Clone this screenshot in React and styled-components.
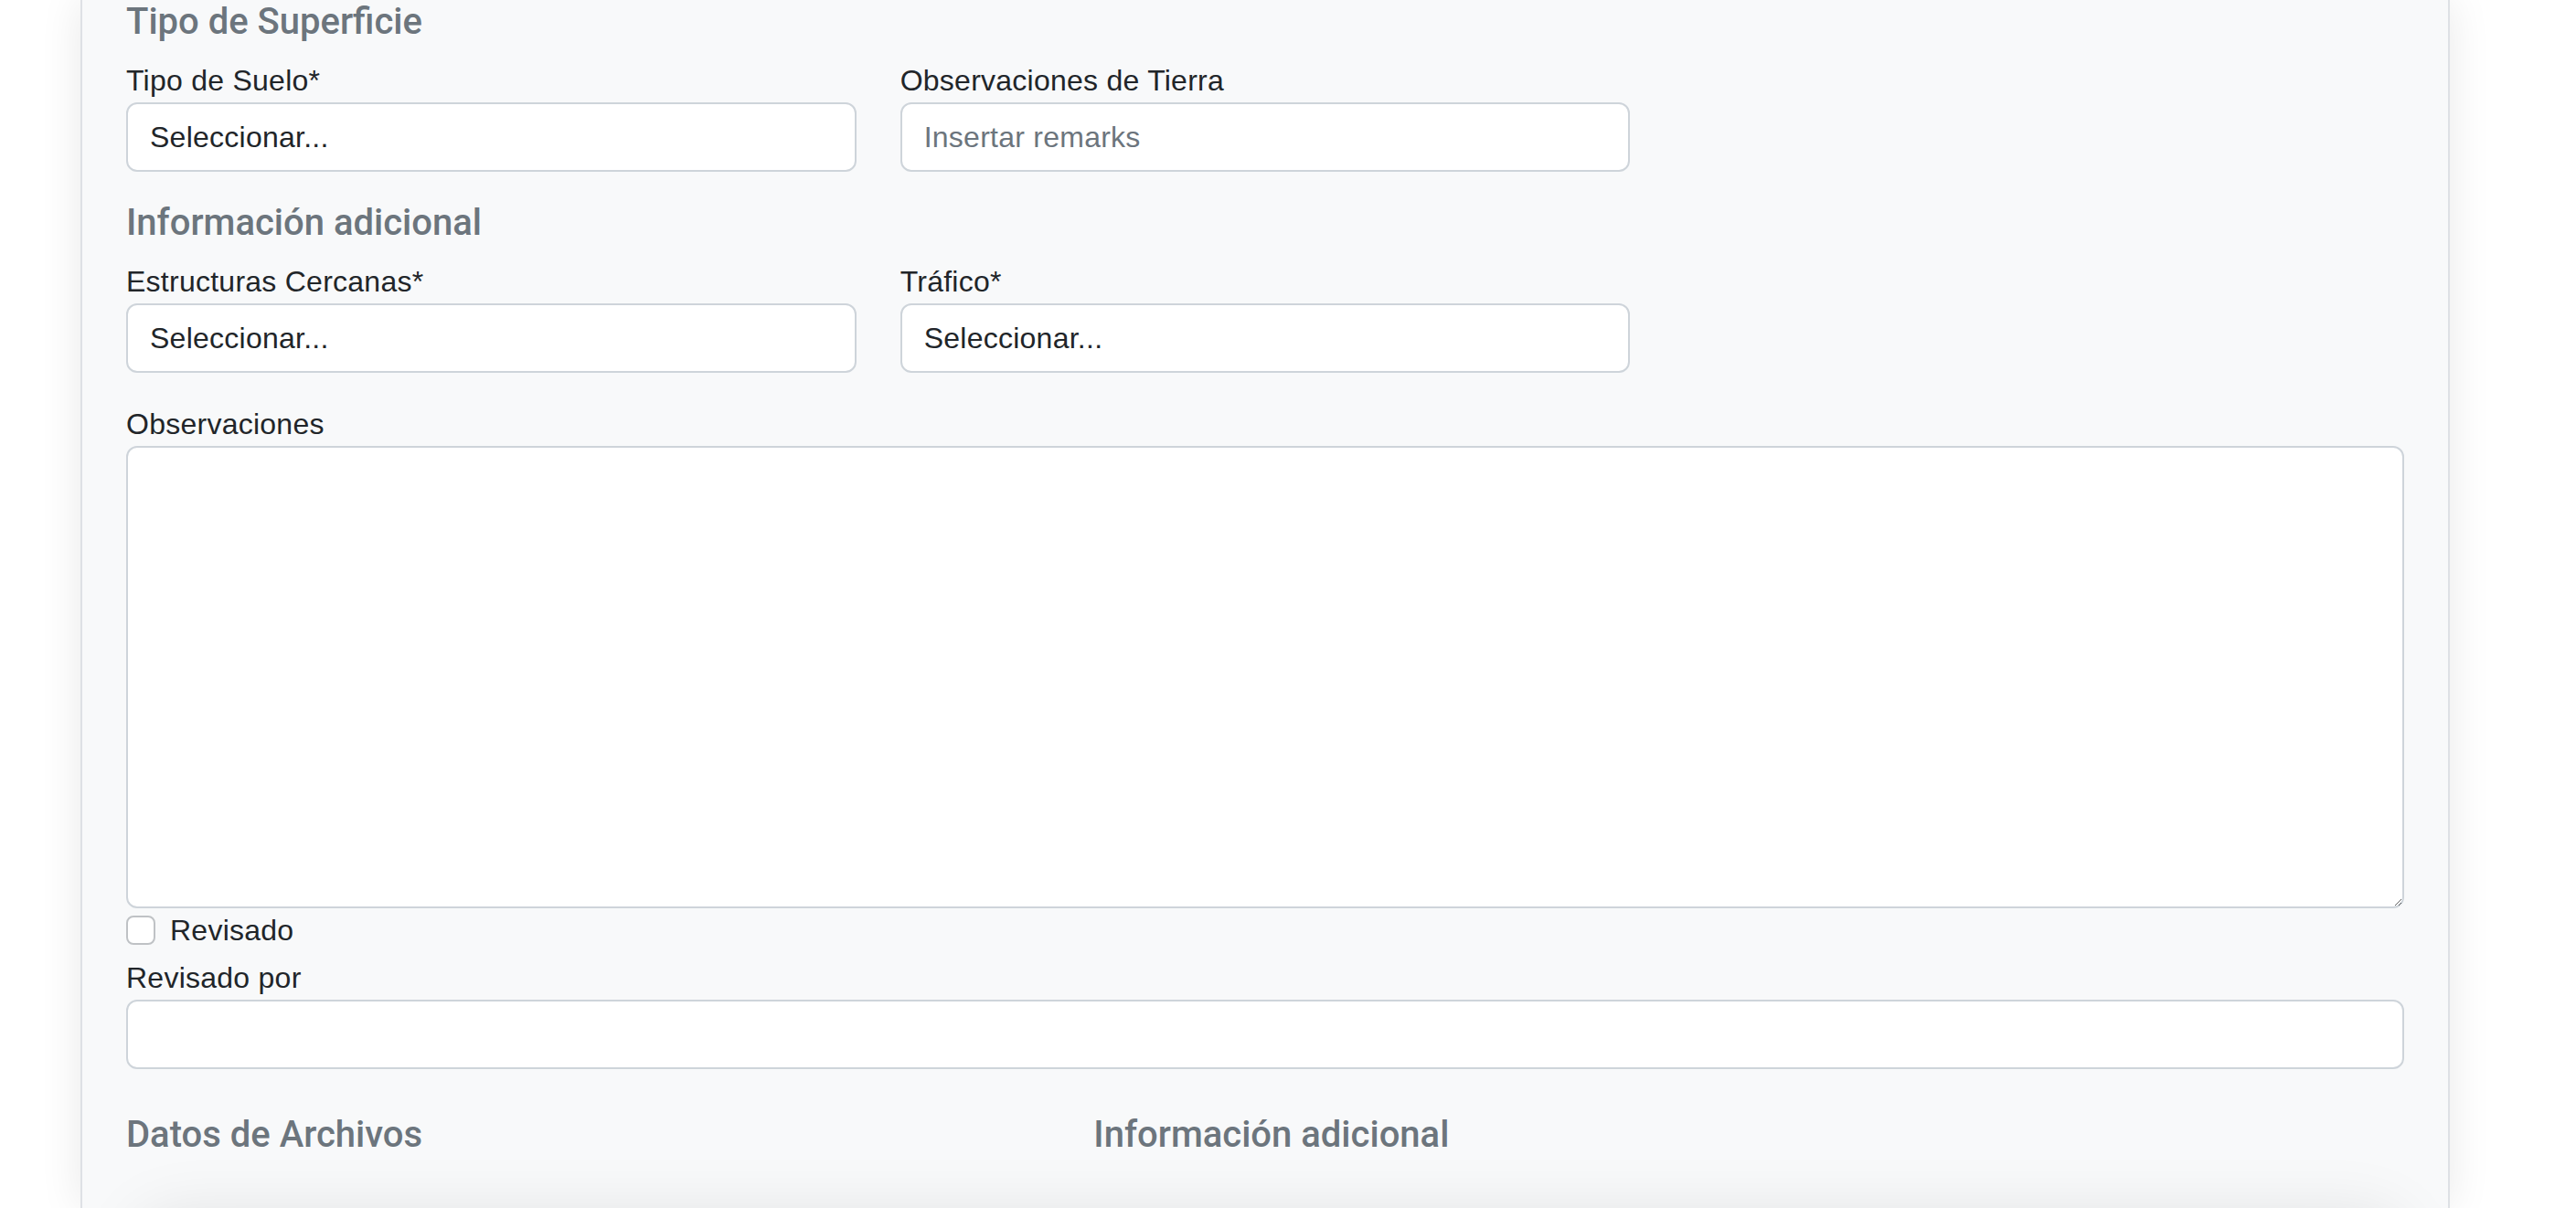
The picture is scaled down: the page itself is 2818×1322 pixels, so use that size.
import React from 'react';
import styled, { createGlobalStyle } from 'styled-components';

const GlobalStyle = createGlobalStyle`
  html, body {
    margin: 0;
    padding: 0;
    background: #ffffff;
    overflow: hidden;
  }
  body {
    font-family: "Liberation Sans", Arial, sans-serif;
    color: #212529;
  }
  * {
    box-sizing: border-box;
  }
`;

const Page = styled.div`
  height: 1322px;
  padding-left: 88px;
`;

const Panel = styled.div`
  width: 2592px;
  min-height: 1322px;
  background: #f8f9fa;
  border-left: 2px solid #dee1e5;
  border-right: 2px solid #dee1e5;
  box-shadow: 0 0 44px rgba(0, 0, 0, 0.09);
  padding: 0 48px;
`;

const SectionTitle = styled.h5`
  margin: 0 0 16px;
  font-family: Roboto, "Liberation Sans", Arial, sans-serif;
  font-size: 40px;
  font-weight: 500;
  line-height: 48px;
  color: #6c757d;
`;

const FieldRow = styled.div`
  display: grid;
  grid-template-columns: repeat(3, 1fr);
  column-gap: 48px;
  margin-bottom: 32px;
`;

const Field = styled.div`
  display: flex;
  flex-direction: column;
  margin-bottom: ${p => p.$mb || 0}px;
`;

const Label = styled.label`
  font-size: 32px;
  line-height: 48px;
  letter-spacing: 0.25px;
  color: #212529;
`;

const TextInput = styled.input`
  height: 76px;
  width: 100%;
  padding: 0 24px;
  font-family: inherit;
  font-size: 32px;
  letter-spacing: 0.25px;
  color: #212529;
  background: #ffffff;
  border: 2px solid #ced4da;
  border-radius: 12px;
  outline: none;

  &::placeholder {
    color: #6c757d;
    opacity: 1;
  }
`;

const TextArea = styled.textarea`
  display: block;
  width: 100%;
  height: 506px;
  padding: 12px 24px;
  font-family: inherit;
  font-size: 32px;
  background: #ffffff;
  border: 2px solid #ced4da;
  border-radius: 12px;
  resize: vertical;
  outline: none;
`;

const CheckRow = styled.div`
  display: flex;
  align-items: flex-start;
  gap: 16px;
  min-height: 48px;
  margin-bottom: 4px;
`;

const CheckBox = styled.input`
  appearance: none;
  flex: none;
  width: 32px;
  height: 32px;
  margin: 8px 0 0;
  background: #ffffff;
  border: 2px solid #bfc2c5;
  border-radius: 8px;
`;

const BottomRow = styled.div`
  display: grid;
  grid-template-columns: calc((100% + 48px) * 5 / 12 - 48px) 1fr;
  column-gap: 48px;
`;

const BelowCard = styled.div`
  position: fixed;
  left: 150px;
  width: 2480px;
  top: 1330px;
  height: 200px;
  border-radius: 40px;
  background: #f8f9fa;
  box-shadow: 0 0 70px rgba(0, 0, 0, 0.1);
`;

const FieldBlock = ({ label, placeholder, value }) => (
  <Field>
    <Label>{label}</Label>
    <TextInput readOnly placeholder={placeholder} defaultValue={value} />
  </Field>
);

export default function App() {
  return (
    <>
      <GlobalStyle />
      <Page>
        <Panel>
          <SectionTitle>Tipo de Superficie</SectionTitle>
          <FieldRow>
            <FieldBlock label="Tipo de Suelo*" value="Seleccionar..." />
            <FieldBlock label="Observaciones de Tierra" placeholder="Insertar remarks" />
          </FieldRow>

          <SectionTitle>Información adicional</SectionTitle>
          <FieldRow>
            <FieldBlock label="Estructuras Cercanas*" value="Seleccionar..." />
            <FieldBlock label="Tráfico*" value="Seleccionar..." />
          </FieldRow>

          <Field>
            <Label>Observaciones</Label>
            <TextArea />
          </Field>
          <CheckRow>
            <CheckBox type="checkbox" id="revisado" />
            <Label htmlFor="revisado">Revisado</Label>
          </CheckRow>
          <Field $mb={48}>
            <Label>Revisado por</Label>
            <TextInput readOnly />
          </Field>

          <BottomRow>
            <SectionTitle>Datos de Archivos</SectionTitle>
            <SectionTitle>Información adicional</SectionTitle>
          </BottomRow>
        </Panel>
      </Page>
      <BelowCard />
    </>
  );
}
